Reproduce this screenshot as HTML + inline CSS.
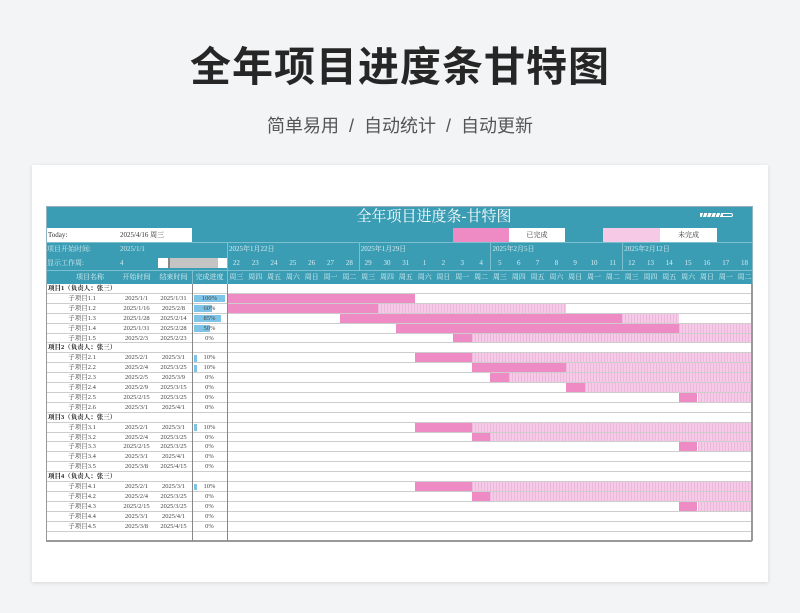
<!DOCTYPE html>
<html><head><meta charset="utf-8"><style>
body{margin:0;width:800px;height:613px;background:#f3f4f5;position:relative;overflow:hidden;font-family:"Liberation Serif","Noto Serif CJK SC",serif}
.t{position:absolute;left:0;width:800px;text-align:center}
#card{position:absolute;left:32px;top:165px;width:736px;height:417px;background:#fff;box-shadow:0 1px 4px rgba(0,0,0,.12)}
.a{position:absolute;white-space:nowrap}
</style></head><body>
<div class="t" style="top:33px;font:bold 41px 'Liberation Sans','Noto Sans CJK SC',sans-serif;color:#262626;letter-spacing:1px">全年项目进度条甘特图</div>
<div class="t" style="top:112px;font:18px 'Liberation Sans','Noto Sans CJK SC',sans-serif;color:#555">简单易用 &nbsp;/&nbsp; 自动统计 &nbsp;/&nbsp; 自动更新</div>
<div id="card"></div>
<div id="s"></div>
<script>
var h='';function A(x,y,w,hh,st,tx){h+='<div class="a" style="left:'+x+'px;top:'+y+'px;width:'+w+'px;height:'+hh+'px;'+st+'">'+(tx||'')+'</div>';}
var X0=227,W=18.82;
A(46,207,706,77,'background:#3b9db4');
A(46,207,706,21,'color:#fff;font-size:15px;line-height:21px;text-align:center;padding-left:70px;box-sizing:border-box','全年项目进度条-甘特图');
A(700,213,22,4,'background:repeating-linear-gradient(110deg,#fff 0 3px,transparent 3px 4px)');
A(722,213,11,4,'border:1px solid #fff;border-radius:0 3px 3px 0;box-sizing:border-box');
A(46,228,146,14,'background:#fff;font-size:7px;line-height:14px;color:#333','<span style="padding-left:2px">Today:</span><span style="position:absolute;left:74px">2025/4/16 周三</span>');
A(453,228,56,14,'background:#ee8ac4');A(509,228,56,14,'background:#fff;font-size:7px;line-height:14px;text-align:center;color:#333','已完成');
A(603,228,57,14,'background:#f6c9e6');A(660,228,57,14,'background:#fff;font-size:7px;line-height:14px;text-align:center;color:#333','未完成');
A(46,242,706,1,'background:#7cbfcf');
A(47,243,80,13,'font-size:7px;line-height:13px;color:#cfe8ee','项目开始时间:');A(120,243,80,13,'font-size:7px;line-height:13px;color:#cfe8ee','2025/1/1');
A(47,257,80,13,'font-size:7px;line-height:13px;color:#cfe8ee','显示工作周:');A(120,257,20,13,'font-size:7px;line-height:13px;color:#cfe8ee','4');
A(158,258,69,10,'background:#fff');A(168,258,50,10,'background:#c4c4c4;border-left:2px solid #888;box-sizing:border-box');
var wk=['2025年1月22日','2025年1月29日','2025年2月5日','2025年2月12日'];
for(var i=0;i<4;i++){var x=X0+i*7*W;A(x,243,1,27,'background:#7cbfcf');A(x+2,243,100,13,'font-size:7px;line-height:13px;color:#d9eef3',wk[i]);}
var wd=['周三','周四','周五','周六','周日','周一','周二'];
for(var i=0;i<28;i++){var d=i<10?22+i:i-9;var x=X0+i*W;A(x,257,W,13,'font-size:7px;line-height:13px;text-align:center;color:#d9eef3',d);A(x,271,W,13,'font-size:7px;line-height:13px;text-align:center;color:#d9eef3',wd[i%7]);}
A(46,270,706,1,'background:#7cbfcf');
[['项目名称',60,60],['开始时间',118,37],['结束时间',155,37],['完成进度',192,35]].forEach(function(c){A(c[1],271,c[2],13,'font-size:7px;line-height:13px;text-align:center;color:#d9eef3',c[0]);});
A(192,271,1,13,'background:#7cbfcf');A(227,271,1,13,'background:#7cbfcf');
var rows=[['项目1（负责人：张三）'],['子项目1.1','2025/1/1','2025/1/31','100%',31,0,10,10],['子项目1.2','2025/1/16','2025/2/8','60%',18,0,8,18],['子项目1.3','2025/1/28','2025/2/14','85%',27,6,21,24],['子项目1.4','2025/1/31','2025/2/28','50%',16,9,24,28],['子项目1.5','2025/2/3','2025/2/23','0%',0,12,13,28],
['项目2（负责人：张三）'],['子项目2.1','2025/2/1','2025/3/1','10%',3,10,13,28],['子项目2.2','2025/2/4','2025/3/25','10%',3,13,18,28],['子项目2.3','2025/2/5','2025/3/9','0%',0,14,15,28],['子项目2.4','2025/2/9','2025/3/15','0%',0,18,19,28],['子项目2.5','2025/2/15','2025/3/25','0%',0,24,25,28],['子项目2.6','2025/3/1','2025/4/1','0%',0],
['项目3（负责人：张三）'],['子项目3.1','2025/2/1','2025/3/1','10%',3,10,13,28],['子项目3.2','2025/2/4','2025/3/25','0%',0,13,14,28],['子项目3.3','2025/2/15','2025/3/25','0%',0,24,25,28],['子项目3.4','2025/3/1','2025/4/1','0%',0],['子项目3.5','2025/3/8','2025/4/15','0%',0],
['项目4（负责人：张三）'],['子项目4.1','2025/2/1','2025/3/1','10%',3,10,13,28],['子项目4.2','2025/2/4','2025/3/25','0%',0,13,14,28],['子项目4.3','2025/2/15','2025/3/25','0%',0,24,25,28],['子项目4.4','2025/3/1','2025/4/1','0%',0],['子项目4.5','2025/3/8','2025/4/15','0%',0],[]];
var P=9.9,Y0=284;
A(46,Y0,706,rows.length*P,'background:#fff');
rows.forEach(function(r,k){var y=Y0+k*P;var ts='font-size:6.5px;line-height:'+P+'px;color:#444;text-align:center;';
 if(r.length==1){A(48,y,140,P,'font-size:6.5px;line-height:'+P+'px;color:#222;font-weight:bold',r[0]);}
 else if(r.length>1){A(52,y,60,P,ts,r[0]);A(118,y,37,P,ts,r[1]);A(155,y,37,P,ts,r[2]);
  if(r[4])A(194,y+1.5,r[4],P-3,'background:#7ec4e6');A(192,y,35,P,ts,r[3]);
  if(r.length>5){var a=X0+r[5]*W,b=X0+r[6]*W,c=X0+r[7]*W;if(b>a)A(a,y,b-a,P,'background:#ee8ac4');if(c>b)A(b,y,Math.min(c,752)-b,P,'background:#f6cbe7 repeating-linear-gradient(90deg,rgba(220,150,200,.35) 0 1px,transparent 1px 3px)');}}
 A(46,y+P-1,706,1,'background:#cdcdcd');});
var H=Y0+rows.length*P;
A(46,Y0,1,H-Y0,'background:#999');A(751,Y0,1.5,H-Y0,'background:#999');A(46,H-1,706,1.5,'background:#999');
A(192,Y0,1.2,H-Y0,'background:#888');A(227,Y0,1.2,H-Y0,'background:#888');
A(46,207,1,77,'background:#8fb5c0');A(752,207,1,77,'background:#8fb5c0');A(46,206,707,1,'background:#9ab');
document.getElementById('s').innerHTML=h;
</script>
</body></html>
